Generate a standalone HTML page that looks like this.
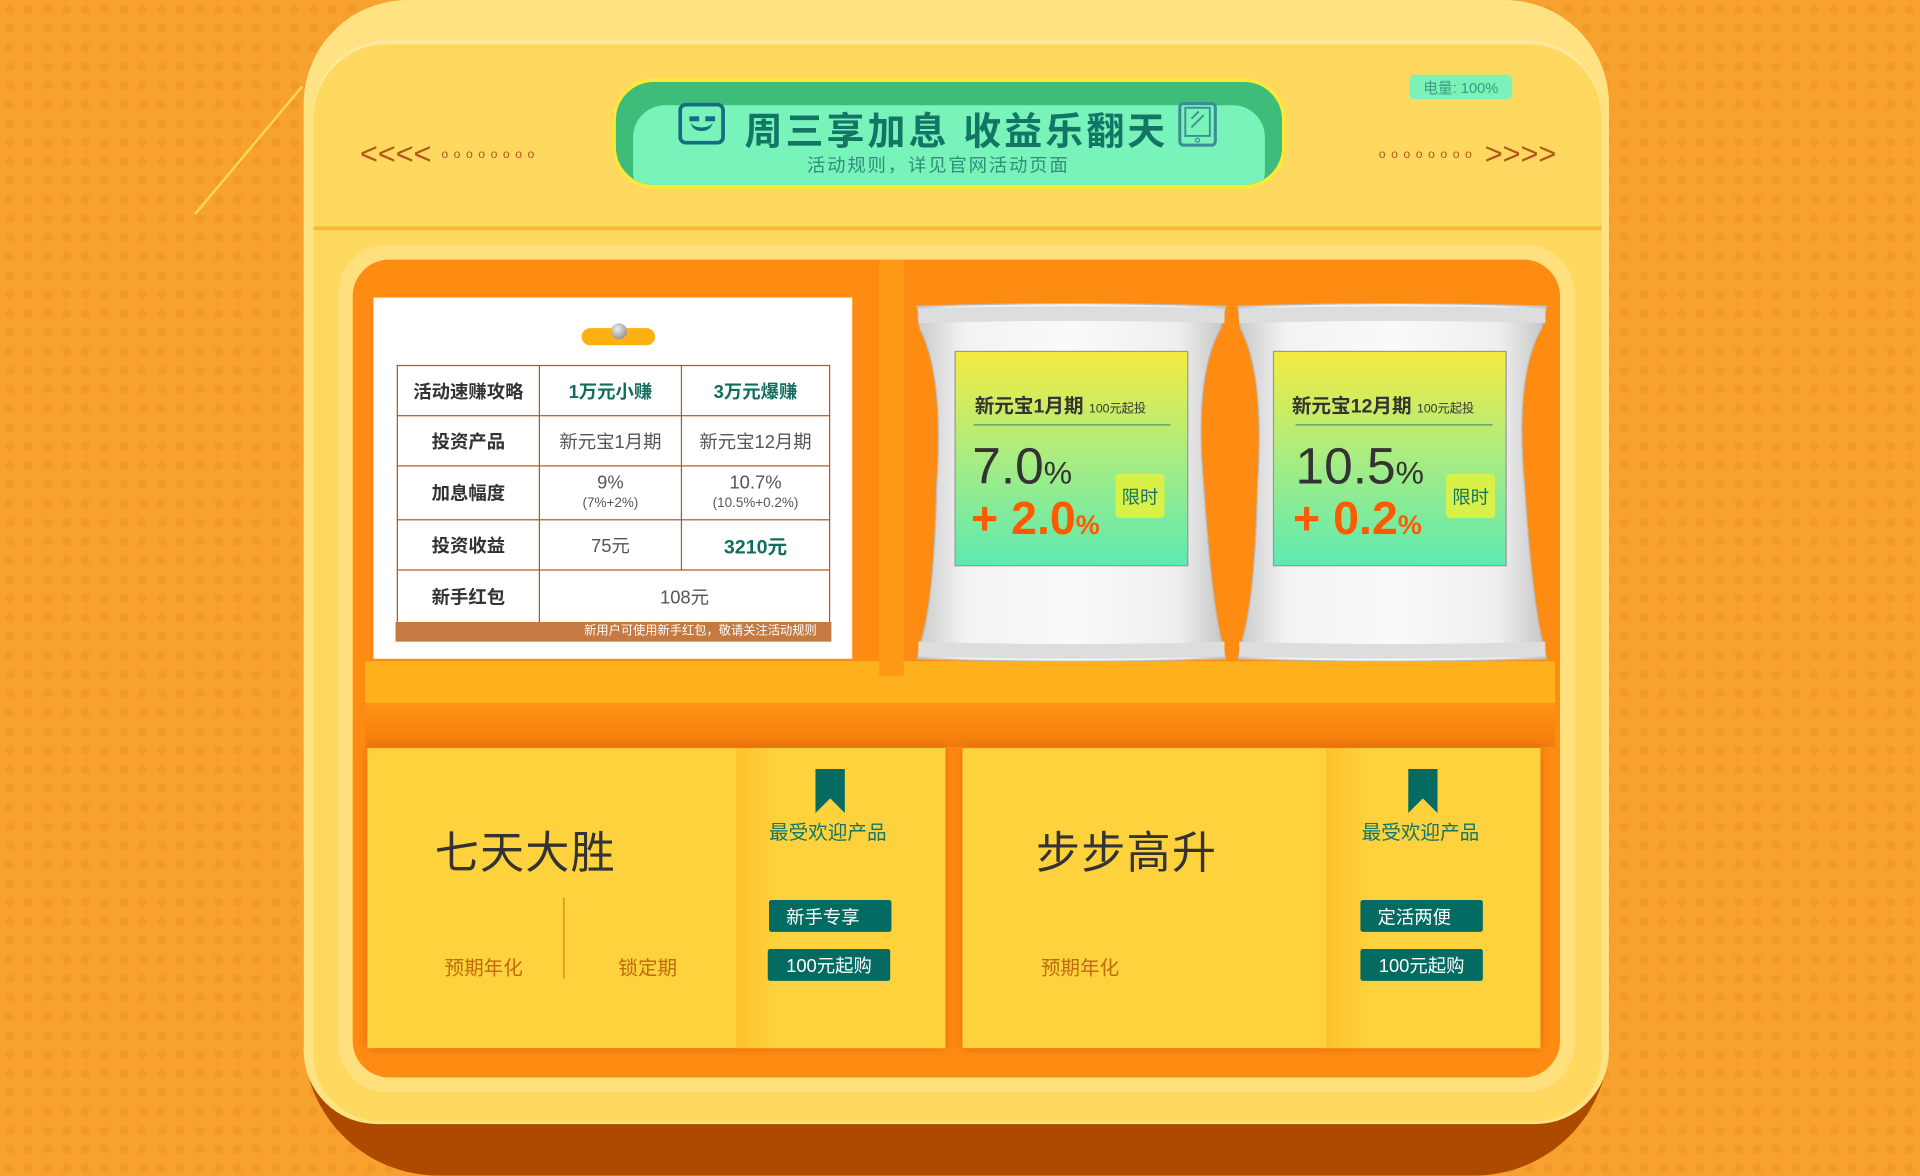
<!DOCTYPE html>
<html><head><meta charset="utf-8"><style>
*{margin:0;padding:0;box-sizing:border-box}
html,body{width:1920px;height:1176px;overflow:hidden;background:#f7a22e}
body{background-color:#f7a22e;background-image:radial-gradient(circle,#f3982a 4px,transparent 5px);background-size:19px 19px;font-family:"Liberation Sans","Noto Sans CJK SC",sans-serif}
#w{position:absolute;left:0;top:0;width:1568px;height:960px;transform:scale(1.22449);transform-origin:0 0}
.a{position:absolute}
.c{display:flex;align-items:center;justify-content:center}
table{border-collapse:collapse;width:354px}
td{border:1.5px solid #b5581c;text-align:center;font-size:15px;color:#555;height:41px}
td.h{font-weight:bold;color:#333}
td.g{color:#0f6e5e;font-weight:bold}
.btn{background:#046b62;color:#fff;font-size:15px;border-radius:2px;height:26px;width:100px}
.dots{display:inline-block;font-size:10px;letter-spacing:4.5px;vertical-align:5px}
</style></head><body><div id="w">
<div class="a" style="left:248px;top:700px;width:1066px;height:260px;background:#ad4a00;border-radius:0 0 110px 110px"></div>
<div class="a" style="left:248px;top:0;width:1066px;height:918px;background:#ffe383;border-radius:85px 85px 60px 60px"></div>
<div class="a" style="left:256px;top:36px;width:1052px;height:880px;background:#ffd95f;border-radius:60px 60px 55px 55px;box-shadow:0 -3px 0 #ffe9a0"></div>
<div class="a" style="left:246px;top:70px;width:1.5px;height:136px;background:#ffd84a;transform:rotate(40deg);transform-origin:0 0"></div>
<div class="a" style="left:256px;top:185px;width:1052px;height:3px;background:#f9b62e"></div>
<div class="a" style="left:294px;top:112px;color:#b5541a;font-size:25px;letter-spacing:0px;white-space:nowrap">&lt;&lt;&lt;&lt;<span class="dots" style="margin-left:8px">oooooooo</span></div>
<div class="a" style="left:1126px;top:112px;color:#b5541a;font-size:25px;letter-spacing:0px;white-space:nowrap"><span class="dots" style="margin-right:6px">oooooooo</span>&gt;&gt;&gt;&gt;</div>
<div class="a c" style="left:1151px;top:61px;width:84px;height:20px;background:#7af2b8;border-radius:4px;font-size:12px;color:#3a9a86">电量: 100%</div>
<div class="a" style="left:500px;top:64px;width:550px;height:90px;background:#3dbc7a;border:3px solid #ffe83a;border-radius:34px;overflow:hidden"><div class="a" style="left:14px;top:19px;width:516px;height:80px;background:#78f4bb;border-radius:26px"></div></div>
<div class="a" style="left:554px;top:84px;width:38px;height:34px;border:3px solid #146d80;border-radius:6px"><div class="a" style="left:6px;top:8px;width:8px;height:4px;background:#146d80"></div><div class="a" style="left:19px;top:8px;width:8px;height:4px;background:#146d80"></div><div class="a" style="left:7px;top:12px;width:18px;height:8px;border-bottom:3px solid #146d80;border-radius:0 0 10px 10px"></div></div>
<div class="a" style="left:608px;top:82px;font-size:31px;font-weight:bold;color:#137565;letter-spacing:2.5px;white-space:nowrap">周三享加息 收益乐翻天</div>
<svg class="a" style="left:962px;top:83px" width="32" height="37"><rect x="1.5" y="1.5" width="29" height="34" rx="3" fill="none" stroke="#3e8b94" stroke-width="2.5"/><rect x="6" y="5" width="20" height="23" fill="none" stroke="#3e8b94" stroke-width="1.5"/><path d="M11 14L17 8M11 21L21 11" stroke="#3e8b94" stroke-width="1.5"/><circle cx="16" cy="31.5" r="1.6" fill="none" stroke="#3e8b94"/></svg>
<div class="a" style="left:659px;top:124px;font-size:15px;color:#2f8e7a;letter-spacing:1.5px;white-space:nowrap">活动规则，详见官网活动页面</div>
<div class="a" style="left:276px;top:200px;width:1010px;height:692px;background:#ffe07c;border-radius:40px"></div>
<div class="a" style="left:288px;top:212px;width:986px;height:668px;background:#ff8c12;border-radius:30px"></div>
<div class="a" style="left:298px;top:540px;width:972px;height:34px;background:#ffb01d"></div>
<div class="a" style="left:718px;top:212px;width:20px;height:340px;background:#ff9a15"></div>
<div class="a" style="left:298px;top:574px;width:972px;height:36px;background:linear-gradient(#ff9414,#f27c0c)"></div>
<div class="a" style="left:305px;top:243px;width:391px;height:295px;background:#fff"></div>
<div class="a" style="left:475px;top:268px;width:60px;height:14px;background:#fdb012;border-radius:7px"></div>
<div class="a" style="left:499px;top:264px;width:13px;height:13px;border-radius:50%;background:radial-gradient(circle at 40% 35%,#eee,#777)"></div>
<div class="a" style="left:324px;top:298px">
<table>
<tr><td class="h" style="width:116px">活动速赚攻略</td><td class="g" style="width:116px">1万元小赚</td><td class="g">3万元爆赚</td></tr>
<tr><td class="h">投资产品</td><td>新元宝1月期</td><td>新元宝12月期</td></tr>
<tr><td class="h" style="height:44px">加息幅度</td><td style="line-height:15px">9%<br><span style="font-size:11px">(7%+2%)</span></td><td style="line-height:15px">10.7%<br><span style="font-size:11px">(10.5%+0.2%)</span></td></tr>
<tr><td class="h">投资收益</td><td>75元</td><td class="g" style="font-size:16px">3210元</td></tr>
<tr><td class="h" style="height:43px">新手红包</td><td colspan="2">108元</td></tr>
</table></div>
<div class="a" style="left:323px;top:508px;width:356px;height:16px;background:#c47a40;color:#fff;font-size:10px;text-align:right;padding-right:12px;line-height:16px">新用户可使用新手红包，敬请关注活动规则</div>
<svg class="a" style="left:745px;top:246px" width="522" height="296" viewBox="0 0 522 296">
<defs><linearGradient id="bg" x1="0" x2="1"><stop offset="0" stop-color="#c9c9c9"/><stop offset=".15" stop-color="#f2f2f2"/><stop offset=".5" stop-color="#fafafa"/><stop offset=".85" stop-color="#eee"/><stop offset="1" stop-color="#c4c4c4"/></linearGradient>
<linearGradient id="lb" x1="0" y1="0" x2="0" y2="1"><stop offset="0" stop-color="#f5ec3f"/><stop offset=".5" stop-color="#a8ec82"/><stop offset="1" stop-color="#5ceab1"/></linearGradient></defs>
<g><path d="M4 4Q130 0 256 4L252 22Q230 60 238 150Q244 240 252 275L256 292Q130 296 4 292L8 275Q18 240 20 150Q26 60 6 22Z" fill="url(#bg)" stroke="#bbb"/>
<path d="M5 6Q130 2 255 6V18Q130 14 5 18Z" fill="#ddd"/><path d="M5 278Q130 282 255 278V290Q130 294 5 290Z" fill="#ddd"/>
<rect x="35" y="41" width="190" height="175" fill="url(#lb)" stroke="#999"/></g>
<g transform="translate(262,0)"><path d="M4 4Q130 0 256 4L252 22Q230 60 238 150Q244 240 252 275L256 292Q130 296 4 292L8 275Q18 240 20 150Q26 60 6 22Z" fill="url(#bg)" stroke="#bbb"/>
<path d="M5 6Q130 2 255 6V18Q130 14 5 18Z" fill="#ddd"/><path d="M5 278Q130 282 255 278V290Q130 294 5 290Z" fill="#ddd"/>
<rect x="33" y="41" width="190" height="175" fill="url(#lb)" stroke="#999"/></g>
<line x1="50" y1="101" x2="211" y2="101" stroke="#4a9a6a"/><line x1="313" y1="101" x2="474" y2="101" stroke="#4a9a6a"/>
</svg>
<div class="a" style="left:796px;top:318px;font-size:16px;font-weight:bold;color:#333">新元宝1月期 <span style="font-size:10px;font-weight:normal">100元起投</span></div>
<div class="a" style="left:1055px;top:318px;font-size:16px;font-weight:bold;color:#333">新元宝12月期 <span style="font-size:10px;font-weight:normal">100元起投</span></div>
<div class="a" style="left:794px;top:358px;font-size:42px;color:#333;line-height:46px">7.0<span style="font-size:26px">%</span></div>
<div class="a" style="left:1058px;top:358px;font-size:42px;color:#333;line-height:46px">10.5<span style="font-size:26px">%</span></div>
<div class="a" style="left:793px;top:402px;font-size:38px;color:#ff5a00;font-weight:bold;line-height:44px">+ 2.0<span style="font-size:22px">%</span></div>
<div class="a" style="left:1056px;top:402px;font-size:38px;color:#ff5a00;font-weight:bold;line-height:44px">+ 0.2<span style="font-size:22px">%</span></div>
<div class="a c" style="left:911px;top:387px;width:40px;height:36px;background:#d9f047;border-radius:3px;color:#137565;font-size:15px">限时</div>
<div class="a c" style="left:1181px;top:387px;width:40px;height:36px;background:#d9f047;border-radius:3px;color:#137565;font-size:15px">限时</div>
<div class="a" style="left:300px;top:611px;width:472px;height:245px;background:#fed23c;box-shadow:0 0 8px rgba(180,70,0,.5)"></div>
<div class="a" style="left:601px;top:611px;width:171px;height:245px;background:linear-gradient(90deg,#fdc22c,#fed23c 20%)"></div>
<div class="a" style="left:786px;top:611px;width:472px;height:245px;background:#fed23c;box-shadow:0 0 8px rgba(180,70,0,.5)"></div>
<div class="a" style="left:1083px;top:611px;width:175px;height:245px;background:linear-gradient(90deg,#fdc22c,#fed23c 20%)"></div>
<div class="a" style="left:355px;top:668px;font-size:36px;color:#333;letter-spacing:1px">七天大胜</div>
<div class="a" style="left:846px;top:668px;font-size:36px;color:#333;letter-spacing:1px">步步高升</div>
<div class="a" style="left:460px;top:733px;width:1px;height:66px;background:#c8841d"></div>
<div class="a" style="left:363px;top:777px;font-size:16px;color:#c06a10">预期年化</div>
<div class="a" style="left:505px;top:777px;font-size:16px;color:#c06a10">锁定期</div>
<div class="a" style="left:850px;top:777px;font-size:16px;color:#c06a10">预期年化</div>
<svg class="a" style="left:666px;top:628px" width="24" height="36"><path d="M0 0H24V36L12 24L0 36Z" fill="#046b62"/></svg>
<svg class="a" style="left:1150px;top:628px" width="24" height="36"><path d="M0 0H24V36L12 24L0 36Z" fill="#046b62"/></svg>
<div class="a" style="left:628px;top:666px;font-size:16px;color:#137565">最受欢迎产品</div>
<div class="a" style="left:1112px;top:666px;font-size:16px;color:#137565">最受欢迎产品</div>
<div class="a c btn" style="left:628px;top:735px;justify-content:flex-start;padding-left:14px">新手专享</div>
<div class="a c btn" style="left:627px;top:775px">100元起购</div>
<div class="a c btn" style="left:1111px;top:735px;justify-content:flex-start;padding-left:14px">定活两便</div>
<div class="a c btn" style="left:1111px;top:775px">100元起购</div>
</div></body></html>
